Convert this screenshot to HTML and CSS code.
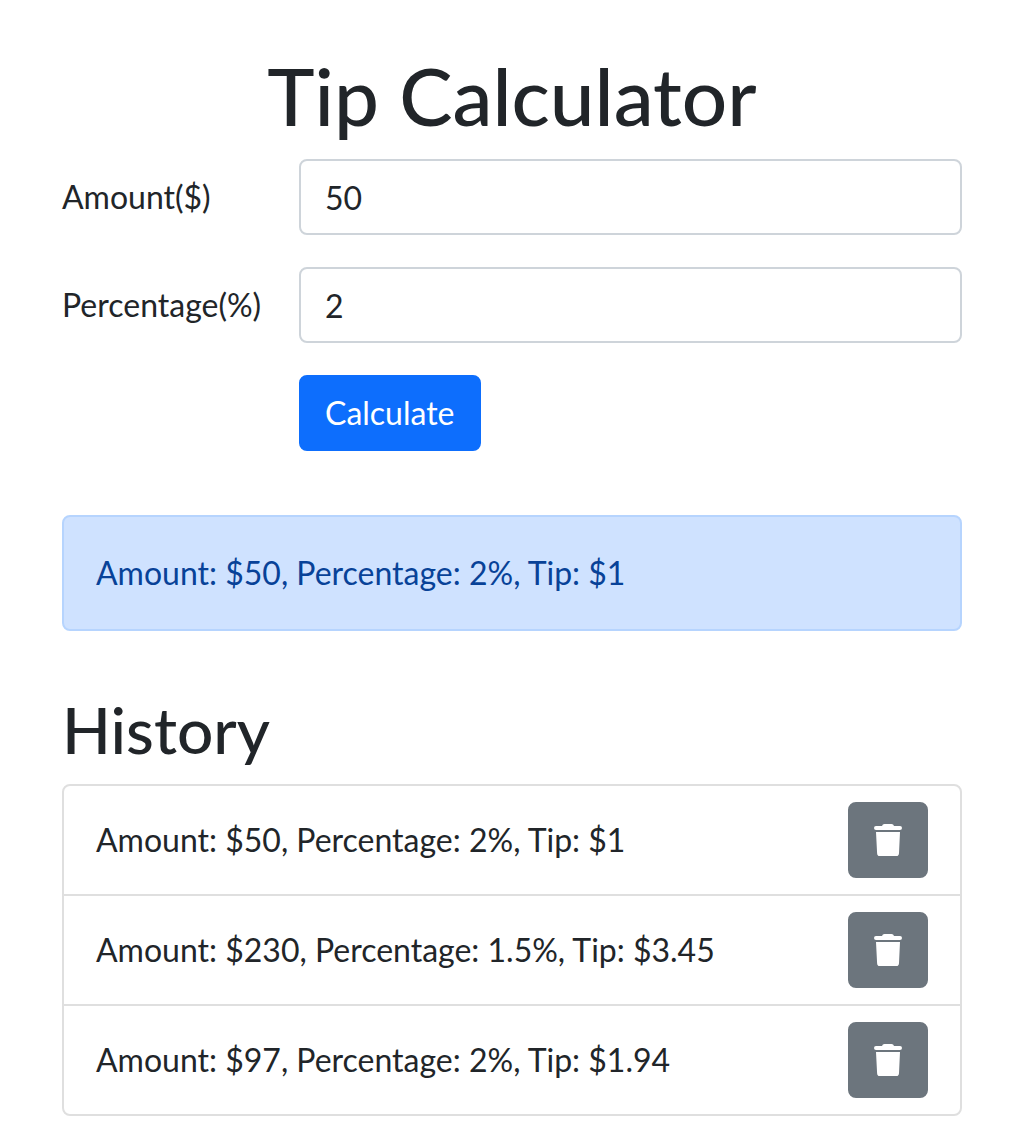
FILE: index.html
```html
<!DOCTYPE html>
<html lang="en">
<head>
<meta charset="utf-8">
<meta name="viewport" content="width=device-width, initial-scale=1">
<title>Tip Calculator</title>
<link rel="stylesheet" href="styles.css">
</head>
<body>
<svg class="sprite" aria-hidden="true">
  <symbol id="trash" viewBox="0 0 28 32">
    <path d="M2 2H8Q8.500 0 10.500 0H17.500Q19.500 0 20 2H26A2 2 0 0 1 26 6H2A2 2 0 0 1 2 2ZM2 8H26L25 29.200Q24.800 32 22.500 32H5.500Q3.200 32 3.100 29.200Z"/>
  </symbol>
</svg>
<main class="container">
  <h1 class="title">Tip Calculator</h1>
  <form class="form">
    <label for="amount">Amount($)</label>
    <input class="control" id="amount" type="text" inputmode="decimal" value="50">
    <label for="percentage">Percentage(%)</label>
    <input class="control" id="percentage" type="text" inputmode="decimal" value="2">
    <button class="button button-primary" type="button">Calculate</button>
  </form>
  <div class="alert" role="status">Amount: $50, Percentage: 2%, Tip: $1</div>
  <h2 class="subtitle">History</h2>
  <ul class="list">
    <li class="item"><span>Amount: $50, Percentage: 2%, Tip: $1</span><button class="button button-secondary" type="button" aria-label="Delete"><svg class="icon"><use href="#trash"/></svg></button></li>
    <li class="item"><span>Amount: $230, Percentage: 1.5%, Tip: $3.45</span><button class="button button-secondary" type="button" aria-label="Delete"><svg class="icon"><use href="#trash"/></svg></button></li>
    <li class="item"><span>Amount: $97, Percentage: 2%, Tip: $1.94</span><button class="button button-secondary" type="button" aria-label="Delete"><svg class="icon"><use href="#trash"/></svg></button></li>
  </ul>
</main>
</body>
</html>
```
FILE: styles.css
```css
* {
  box-sizing: border-box;
}

body {
  margin: 0;
  background: #fff;
  color: #212529;
  font: 400 32px/48px Lato, sans-serif;
}

.sprite {
  display: none;
}

.container {
  padding: 47px 62px 24px;
}

.title,
.subtitle {
  margin: 0 0 16px;
  font-weight: 500;
}

.title {
  font-size: 80px;
  line-height: 96px;
  text-align: center;
}

.subtitle {
  font-size: 64px;
  line-height: 77px;
}

.form {
  display: grid;
  grid-template-columns: 205px 1fr;
  gap: 32px;
  align-items: center;
}

.control,
.button {
  height: 76px;
  border-radius: 8px;
  font: inherit;
}

.control {
  width: 100%;
  padding: 12px 24px;
  border: 2px solid #ced4da;
  background: #fff;
  color: inherit;
}

.button {
  padding: 12px 24px;
  border: 2px solid transparent;
  color: #fff;
  cursor: pointer;
}

.button-primary {
  grid-column: 2;
  justify-self: start;
  border-color: #0d6efd;
  background: #0d6efd;
}

.button-secondary {
  display: flex;
  align-items: center;
  border-color: #6c757d;
  background: #6c757d;
}

.alert {
  margin: 64px 0 60px;
  padding: 32px;
  border: 2px solid #b6d4fe;
  border-radius: 8px;
  background: #cfe2ff;
  color: #084298;
}

.list {
  margin: 0;
  padding: 0;
  border: 2px solid #dfdfdf;
  border-radius: 8px;
  list-style: none;
}

.item {
  display: flex;
  align-items: center;
  justify-content: space-between;
  padding: 16px 32px;
}

.item + .item {
  border-top: 2px solid #dfdfdf;
}

.icon {
  width: 28px;
  height: 32px;
  fill: currentColor;
}
```
